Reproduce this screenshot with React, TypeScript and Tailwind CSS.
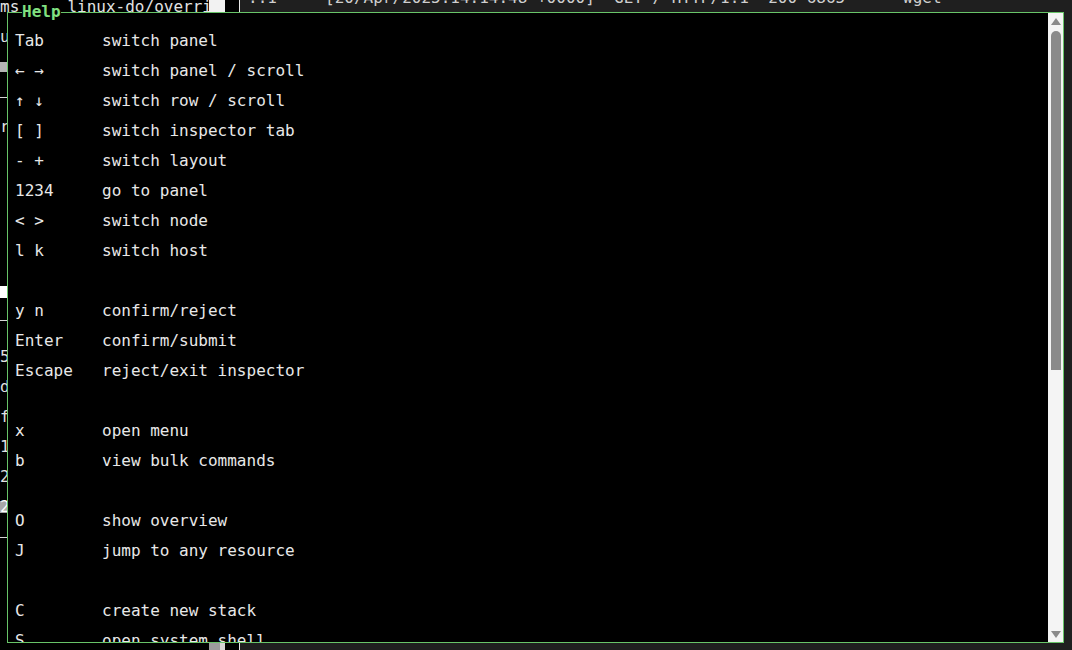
import React from 'react';

const help: ([string, string] | null)[] = [
  ['Tab', 'switch panel'],
  ['← →', 'switch panel / scroll'],
  ['↑ ↓', 'switch row / scroll'],
  ['[ ]', 'switch inspector tab'],
  ['- +', 'switch layout'],
  ['1234', 'go to panel'],
  ['< >', 'switch node'],
  ['l k', 'switch host'],
  null,
  ['y n', 'confirm/reject'],
  ['Enter', 'confirm/submit'],
  ['Escape', 'reject/exit inspector'],
  null,
  ['x', 'open menu'],
  ['b', 'view bulk commands'],
  null,
  ['O', 'show overview'],
  ['J', 'jump to any resource'],
  null,
  ['C', 'create new stack'],
  ['S', 'open system shell'],
];

function Line({ children }: { children?: React.ReactNode }) {
  return <div className="h-[30px] leading-[30px] whitespace-pre">{children}</div>;
}

function LeftPane() {
  return (
    <div className="flex w-[239px] shrink-0 bg-black text-[#e2e2e2]">
      <div className="w-[209px] overflow-hidden">
        <div className="-mt-[8px]">
          <Line>ms     linux-do/override.yml</Line>
          <Line>up</Line>
          <div className="h-[30px] flex items-center">
            <div className="h-[10px] w-[10px] bg-[#b5b5b5]" />
          </div>
          <div className="h-[30px] flex items-center">
            <div className="h-px w-full bg-[#d8d8d8]" />
          </div>
          <Line>r</Line>
          <div className="h-[144px]" />
          <div className="h-[12px] w-[10px] bg-white" />
          <div className="h-[44px] flex items-center">
            <div className="h-px w-full bg-[#d8d8d8]" />
          </div>
          <Line>5</Line>
          <Line>d</Line>
          <Line>f</Line>
          <Line>1</Line>
          <Line>2</Line>
          <div className="h-[30px] flex items-center">
            <span className="leading-[12px] bg-[#a8a8a8] text-white">2</span>
          </div>
          <div className="h-[30px] flex items-center">
            <div className="h-px w-full bg-[#d8d8d8]" />
          </div>
        </div>
      </div>
      <div className="w-[16px] flex flex-col">
        <div className="h-[13px] bg-[#f2f2f2]" />
        <div className="flex-1" />
        <div className="h-[7px] flex">
          <div className="w-[11px] bg-[#9c9c9c]" />
          <div className="w-[5px] bg-[#d6d6d6]" />
        </div>
      </div>
      <div className="w-[14px]" />
    </div>
  );
}

function RightPane() {
  return (
    <div className="flex-1 bg-[#1f1f1f] text-[#cfcfcf] pl-[8px] overflow-hidden">
      <div className="-mt-[17px]">
        <Line>{'::1 - - [20/Apr/2025:14:14:48 +0000] "GET / HTTP/1.1" 200 6865 "-" "wget"'}</Line>
      </div>
    </div>
  );
}

function Scrollbar() {
  return (
    <div className="w-[15px] shrink-0 bg-[#f4f4f4] flex flex-col items-center">
      <svg width="10" height="8" viewBox="0 0 10 8" className="mt-[5px]">
        <path d="M5 0 L10 7 L0 7 Z" fill="#8a8a8a" />
      </svg>
      <div className="mt-[5px] h-[339px] w-[10px] rounded-t-full rounded-b-[3px] bg-[#8a8a8a]" />
      <div className="flex-1" />
      <svg width="10" height="8" viewBox="0 0 10 8" className="mb-[4px]">
        <path d="M0 1 L10 1 L5 8 Z" fill="#8a8a8a" />
      </svg>
    </div>
  );
}

function HelpDialog() {
  return (
    <div className="absolute left-[7px] top-[12px] w-[1057px] h-[631px] border border-[#68c468] bg-black flex">
      <div className="absolute -top-[9px] left-[14px] leading-[16px] bg-black font-bold text-[#80e080]">
        Help
      </div>
      <div className="flex-1 overflow-hidden pl-[7px] pt-[13px] text-[#e8e8e8]">
        {help.map((row, i) =>
          row ? (
            <div key={i} className="flex h-[30px] leading-[30px] whitespace-pre">
              <div className="w-[87px] shrink-0">{row[0]}</div>
              <div>{row[1]}</div>
            </div>
          ) : (
            <div key={i} className="h-[30px]" />
          )
        )}
      </div>
      <Scrollbar />
    </div>
  );
}

export default function App() {
  return (
    <div className="relative w-[1072px] h-[650px] overflow-hidden bg-black font-['DejaVu_Sans_Mono',monospace] text-[16px]">
      <div className="flex h-full">
        <LeftPane />
        <div className="w-px bg-[#e8e8e8]" />
        <RightPane />
      </div>
      <HelpDialog />
    </div>
  );
}
